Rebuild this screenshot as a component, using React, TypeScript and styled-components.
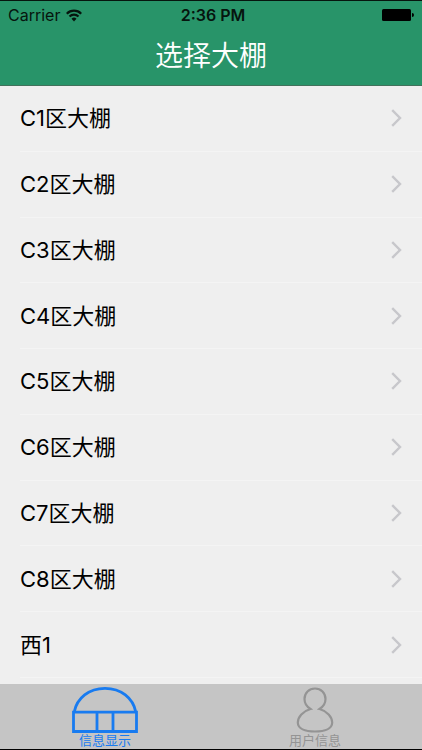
import React, { useState } from 'react';
import styled, { createGlobalStyle } from 'styled-components';

const GlobalStyle = createGlobalStyle`
  * { box-sizing: border-box; }
  body {
    margin: 0;
    background: #efefef;
    color: #000;
    font-family: Inter, "Noto Sans CJK SC", sans-serif;
  }
`;

const Screen = styled.div`
  display: flex;
  flex-direction: column;
  min-height: 100vh;
  border-top: 1px solid #06150e;
  border-bottom: 1px solid #000;
`;

const Header = styled.header`
  background: #289469;
  border-bottom: 1px solid #42725c;
`;

const StatusBar = styled.div`
  display: grid;
  grid-template-columns: 1fr auto 1fr;
  align-items: center;
  height: 28px;
  padding: 0 8px;
  font-size: 16px;
  line-height: 20px;
  color: #06150e;
`;

const Carrier = styled.div`
  display: flex;
  align-items: center;
  gap: 6px;
`;

const Clock = styled.time`
  padding-left: 4px;
  font-weight: 600;
`;

const BatteryIcon = styled.svg`
  justify-self: end;
`;

const Title = styled.h1`
  margin: 0;
  padding: 7px 0 9px;
  font-size: 28px;
  line-height: 40px;
  font-weight: 350;
  text-align: center;
  color: #fff;
`;

const List = styled.ul`
  flex: 1;
  display: grid;
  grid-auto-rows: 1fr;
  margin: 0;
  padding: 0 0 6px 20px;
  list-style: none;
`;

const Item = styled.li`
  display: flex;
  border-bottom: 1px solid #f4f4f4;
`;

const RowButton = styled.button`
  flex: 1;
  display: flex;
  align-items: center;
  justify-content: space-between;
  min-height: 48px;
  padding: 0 20px 0 0;
  border: 0;
  background: none;
  color: inherit;
  font: inherit;
  font-size: 22px;
  line-height: 32px;
  text-align: left;
  cursor: pointer;
`;

const TabBar = styled.nav`
  display: grid;
  grid-template-columns: 1fr 1fr;
  padding-right: 2px;
  background: #c5c5c5;
`;

const Tab = styled.button<{ $active: boolean }>`
  display: flex;
  flex-direction: column;
  align-items: center;
  padding: 3px 0 2px;
  border: 0;
  background: none;
  font: inherit;
  font-size: 13px;
  line-height: 14px;
  color: ${({ $active }) => ($active ? '#187bf0' : '#949494')};
  cursor: pointer;
`;

const houses = ['C1区大棚', 'C2区大棚', 'C3区大棚', 'C4区大棚', 'C5区大棚', 'C6区大棚', 'C7区大棚', 'C8区大棚', '西1'];

const Wifi = () => (
  <svg width="16" height="13" viewBox="0 0 16 13" fill="none" stroke="#06150e" strokeWidth="2.2" aria-hidden="true">
    <path d="M.8 4.7a10.2 10.2 0 0 1 14.4 0" />
    <path d="M3.5 7.5a6.4 6.4 0 0 1 9 0" />
    <path d="M8 12.4 5.5 9.8a3.6 3.6 0 0 1 5 0Z" fill="#06150e" stroke="none" />
  </svg>
);

const Chevron = () => (
  <svg width="11" height="18" viewBox="0 0 11 18" fill="none" stroke="#c7c7cb" strokeWidth="2.4" aria-hidden="true">
    <path d="m1.2 1.2 7.8 7.8-7.8 7.8" />
  </svg>
);

const Greenhouse = () => (
  <svg width="66" height="46" viewBox="0 0 66 46" fill="none" stroke="currentColor" strokeWidth="2.8" aria-hidden="true">
    <path d="M1.5 25.2h63v19.3h-63ZM25 25v19.5M41 25v19.5M2.2 25C5 11 17 1.4 33 1.4S61 11 63.8 25" />
  </svg>
);

const Person = () => (
  <svg width="38" height="46" viewBox="0 0 38 46" fill="none" stroke="currentColor" strokeWidth="2.2" aria-hidden="true">
    <path d="M14.5 22C10.5 19.5 8.5 16 8.5 12 8.5 6 13 1.5 19 1.5S29.5 6 29.5 12C29.5 16 27.5 19.5 23.5 22C31 24 36.2 30 36.2 35.5C36.2 41.5 29 44.5 19 44.5S1.8 41.5 1.8 35.5C1.8 30 7 24 14.5 22Z" />
  </svg>
);

export default function App() {
  const [tab, setTab] = useState(0);
  return (
    <>
      <GlobalStyle />
      <Screen>
        <Header>
          <StatusBar>
            <Carrier>
              <span>Carrier</span>
              <Wifi />
            </Carrier>
            <Clock>2:36 PM</Clock>
            <BatteryIcon width="32" height="12" viewBox="0 0 32 12" aria-label="Battery full">
              <rect width="29" height="12" rx="1.5" />
              <path d="M30 4a2 2 0 0 1 0 4Z" />
            </BatteryIcon>
          </StatusBar>
          <Title>选择大棚</Title>
        </Header>
        <List>
          {houses.map((name) => (
            <Item key={name}>
              <RowButton type="button">
                <span>{name}</span>
                <Chevron />
              </RowButton>
            </Item>
          ))}
        </List>
        <TabBar>
          <Tab type="button" $active={tab === 0} onClick={() => setTab(0)}>
            <Greenhouse />
            <span>信息显示</span>
          </Tab>
          <Tab type="button" $active={tab === 1} onClick={() => setTab(1)}>
            <Person />
            <span>用户信息</span>
          </Tab>
        </TabBar>
      </Screen>
    </>
  );
}
